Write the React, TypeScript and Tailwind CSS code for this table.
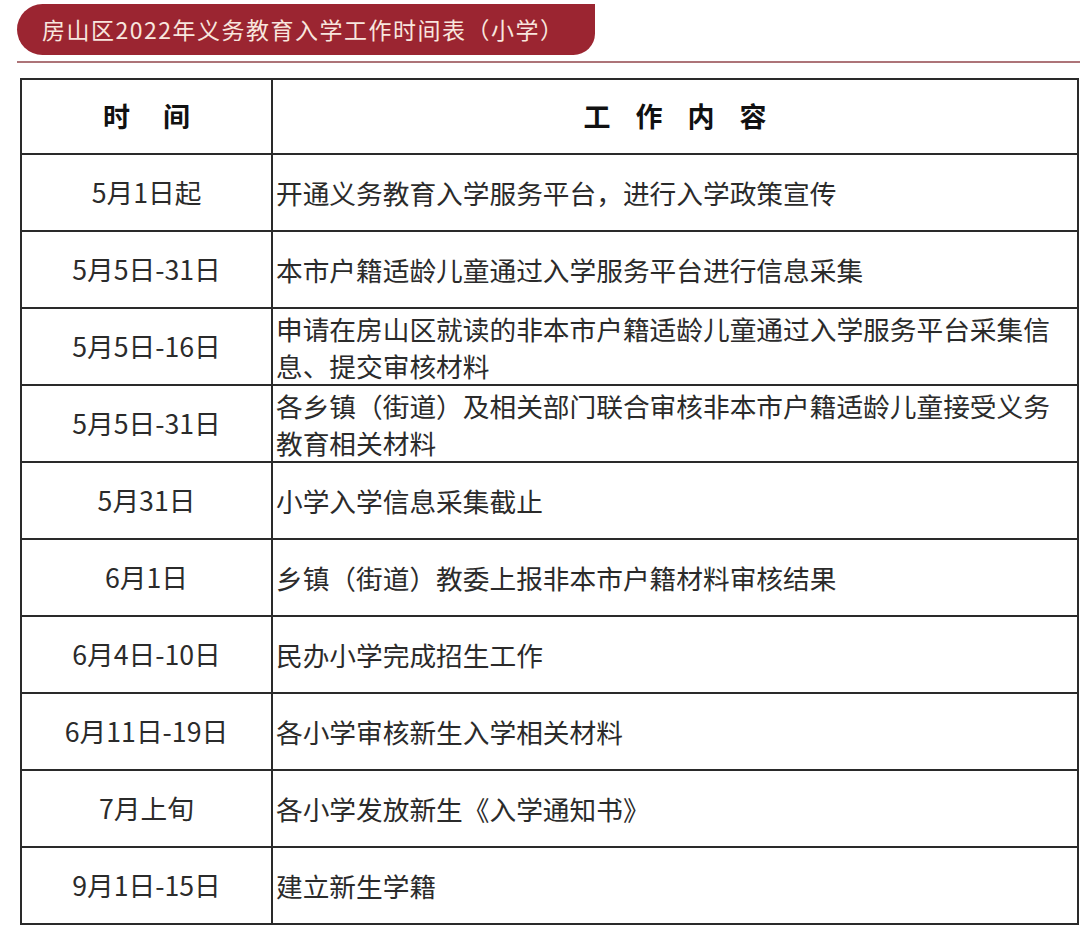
import React from "react";

const rows: { time: string; lines: string[] }[] = [
  { time: "5月1日起", lines: ["开通义务教育入学服务平台，进行入学政策宣传"] },
  { time: "5月5日-31日", lines: ["本市户籍适龄儿童通过入学服务平台进行信息采集"] },
  {
    time: "5月5日-16日",
    lines: ["申请在房山区就读的非本市户籍适龄儿童通过入学服务平台采集信", "息、提交审核材料"],
  },
  {
    time: "5月5日-31日",
    lines: ["各乡镇（街道）及相关部门联合审核非本市户籍适龄儿童接受义务", "教育相关材料"],
  },
  { time: "5月31日", lines: ["小学入学信息采集截止"] },
  { time: "6月1日", lines: ["乡镇（街道）教委上报非本市户籍材料审核结果"] },
  { time: "6月4日-10日", lines: ["民办小学完成招生工作"] },
  { time: "6月11日-19日", lines: ["各小学审核新生入学相关材料"] },
  { time: "7月上旬", lines: ["各小学发放新生《入学通知书》"] },
  { time: "9月1日-15日", lines: ["建立新生学籍"] },
];

export default function App() {
  return (
    <div
      className="w-[1080px] h-[935px] bg-white pt-[4px]"
      style={{ fontFamily: '"Noto Sans CJK SC", "Noto Sans", sans-serif' }}
    >
      <div className="ml-[17px] w-[578px] h-[51px] bg-[#9b2531] rounded-l-[26px] rounded-br-[22px] flex items-center pl-[25px]">
        <span className="text-[#f8e6de] text-[23px] tracking-[1.5px] leading-none">
          房山区2022年义务教育入学工作时间表（小学）
        </span>
      </div>
      <div className="mt-[6px] ml-[17px] h-[2px] bg-[#ad7478]" />

      <div className="mt-[15px] ml-[20px] w-[1059px] border-2 border-[#2a2a2a] text-[#2b2b2b]">
        <div className="flex h-[75px] border-b-2 border-[#2a2a2a]">
          <div className="w-[251px] border-r-2 border-[#2a2a2a] flex items-center justify-center gap-[33px] text-[27px] font-bold text-[#111]">
            <span>时</span>
            <span>间</span>
          </div>
          <div className="flex-1 flex items-center justify-center gap-[25px] text-[27px] font-bold text-[#111]">
            <span>工</span>
            <span>作</span>
            <span>内</span>
            <span>容</span>
          </div>
        </div>
        {rows.map((r, i) => (
          <div
            key={i}
            className={
              i === rows.length - 1
                ? "flex h-[75px]"
                : "flex h-[77px] border-b-2 border-[#2a2a2a]"
            }
          >
            <div className="w-[251px] border-r-2 border-[#2a2a2a] flex items-center justify-center text-[26.7px]">
              {r.time}
            </div>
            <div className="flex-1 flex flex-col justify-center pl-[3px] text-[26.7px] leading-[37px]">
              {r.lines.map((l, j) => (
                <div key={j} className="whitespace-nowrap">
                  {l}
                </div>
              ))}
            </div>
          </div>
        ))}
      </div>
    </div>
  );
}
